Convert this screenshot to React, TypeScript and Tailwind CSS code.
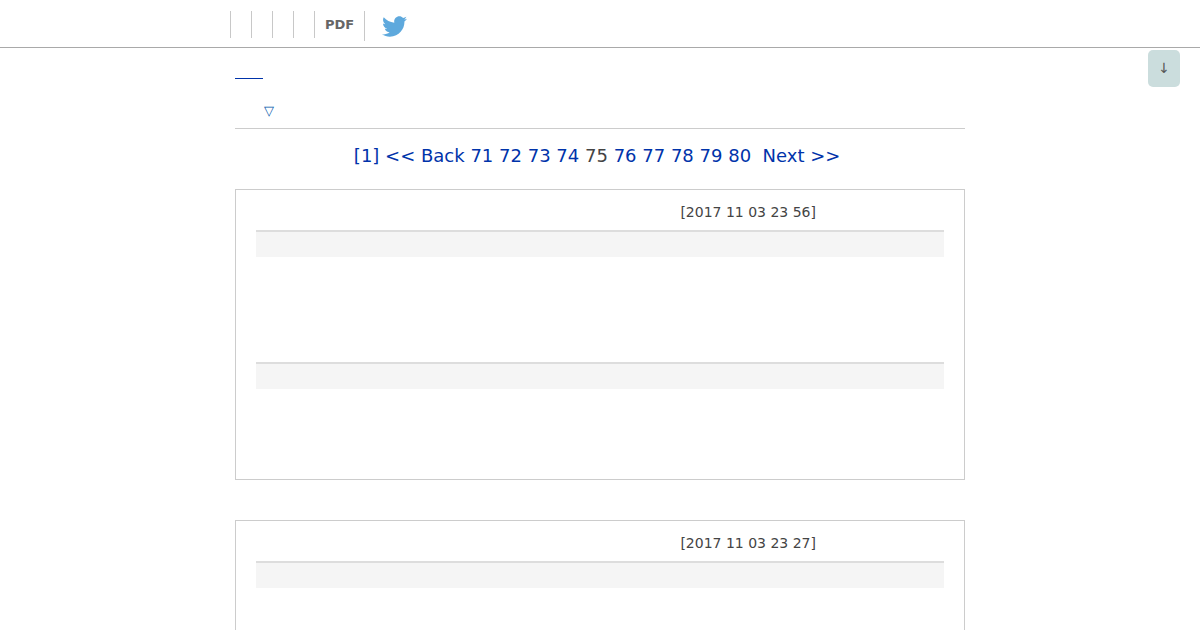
import { FaTwitter } from 'react-icons/fa';

interface Post {
  date: string;
  hasReply: boolean;
}

const posts: Post[] = [
  { date: '[2017 11 03 23 56]', hasReply: true },
  { date: '[2017 11 03 23 27]', hasReply: true },
];

const pages = [71, 72, 73, 74, 75, 76, 77, 78, 79, 80];
const currentPage = 75;

function Header() {
  return (
    <header className="h-12 border-b border-[#a9a9a9]">
      <nav className="mx-auto flex w-full max-w-[740px] items-start pt-[11px]">
        {/* Empty menu slots, each with its own divider */}
        {[0, 1, 2, 3].map(slot => (
          <span key={slot} className="h-[27px] w-[21px] border-l border-[#c8c8c8]" />
        ))}
        <a
          href="#pdf"
          className="h-[27px] border-l border-[#c8c8c8] px-[10px] text-[13px] leading-[27px] font-bold text-[#666]"
        >
          PDF
        </a>
        <a
          href="#twitter"
          aria-label="Twitter"
          className="flex h-[30px] items-center border-l border-[#c8c8c8] pl-[17px]"
        >
          <FaTwitter size={25} color="#5ea9dd" />
        </a>
      </nav>
    </header>
  );
}

function Pagination() {
  return (
    <nav className="py-3 text-center text-lg leading-[30px] text-[#0033aa]">
      <a href="#1">[1]</a> <a href="#prev">&lt;&lt; Back</a>{' '}
      {pages.map(page => (
        <span key={page}>
          {page === currentPage ? (
            <span className="text-[#444]">{page}</span>
          ) : (
            <a href={`#${page}`}>{page}</a>
          )}{' '}
        </span>
      ))}
      &nbsp;<a href="#next">Next &gt;&gt;</a>&nbsp;
    </nav>
  );
}

function Bar() {
  return <div className="h-[27px] border-t-2 border-[#ddd] bg-[#f5f5f5]" />;
}

function PostCard({ post }: { post: Post }) {
  return (
    <article className="border border-[#ccc] px-5">
      <div className="flex h-10 items-center justify-end pt-1 pr-32 text-sm text-[#444]">
        <time>{post.date}</time>
      </div>
      <Bar />
      <div className="h-[105px]" />
      {post.hasReply && <Bar />}
      <div className="h-[90px]" />
    </article>
  );
}

export default function App() {
  return (
    <div className="min-h-screen bg-white font-['DejaVu_Sans',sans-serif]">
      <Header />

      <main className="mx-auto w-full max-w-[730px]">
        <div className="border-b border-[#ccc] pt-[30px]">
          <a href="#top" aria-label="Top" className="block w-7 border-b border-[#0033aa]" />
          <button
            type="button"
            aria-label="Open menu"
            className="mt-6 mb-[9px] ml-[29px] block text-[13px] leading-4 text-[#0055aa]"
          >
            ▽
          </button>
        </div>

        <Pagination />

        <div className="mt-[6px] flex flex-col gap-10">
          {posts.map(post => (
            <PostCard key={post.date} post={post} />
          ))}
        </div>
      </main>

      {/* Jump to the bottom of the page */}
      <a
        href="#bottom"
        className="fixed top-[50px] right-5 flex h-[37px] w-8 items-center justify-center rounded-[5px] bg-[#cbdddd] pb-0.5 text-sm text-[#555]"
      >
        ↓
      </a>
    </div>
  );
}
